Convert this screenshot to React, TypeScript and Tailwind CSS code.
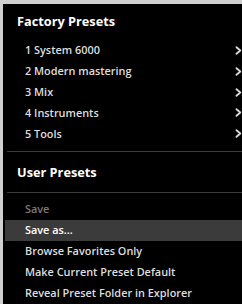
import React from "react";

const Chevron = () => (
  <svg width="7" height="9" viewBox="0 0 7 9" className="shrink-0">
    <path d="M1.5 1.2 L5.3 4.5 L1.5 7.8" fill="none" stroke="#d8d8d8" strokeWidth="1.8" strokeLinecap="round" strokeLinejoin="round" />
  </svg>
);

const factory = ["1 System 6000", "2 Modern mastering", "3 Mix", "4 Instruments", "5 Tools"];

export default function App() {
  return (
    <div
      className="w-[242px] h-[304px] bg-[#cfcfcf] pt-[4px] pl-[3px] overflow-hidden"
      style={{ fontFamily: '"Open Sans", "Liberation Sans", Arial, sans-serif' }}
    >
      <div className="w-full h-full bg-black flex flex-col">
        <div className="h-[36px] flex items-center pl-[14px] text-[12.75px] font-bold text-white">
          Factory Presets
        </div>
        {factory.map((f) => (
          <div key={f} className="h-[21px] flex items-center justify-between pl-[22px] pr-0 text-[10.9px] font-semibold text-[#dedede]">
            <span>{f}</span>
            <Chevron />
          </div>
        ))}
        <div className="mt-[7px] ml-[4px] h-px bg-[#3a3a3a]" />
        <div className="h-[40px] flex items-center pl-[14px] text-[12.75px] font-bold text-white">
          User Presets
        </div>
        <div className="ml-[4px] h-px bg-[#3a3a3a]" />
        <div className="pt-[6px] flex flex-col">
          <div className="h-[21px] flex items-center pl-[22px] text-[10.9px] font-semibold text-[#7a7a7a]">Save</div>
          <div className="h-[21px] flex items-center pl-[20px] ml-[2px] bg-[#3b3b3b] text-[10.9px] font-semibold text-white">Save as...</div>
          <div className="h-[21px] flex items-center pl-[22px] text-[10.9px] font-semibold text-[#dedede]">Browse Favorites Only</div>
          <div className="h-[21px] flex items-center pl-[22px] text-[10.9px] font-semibold text-[#dedede]">Make Current Preset Default</div>
          <div className="h-[21px] flex items-center pl-[22px] text-[10.9px] font-semibold text-[#dedede]">Reveal Preset Folder in Explorer</div>
        </div>
      </div>
    </div>
  );
}
